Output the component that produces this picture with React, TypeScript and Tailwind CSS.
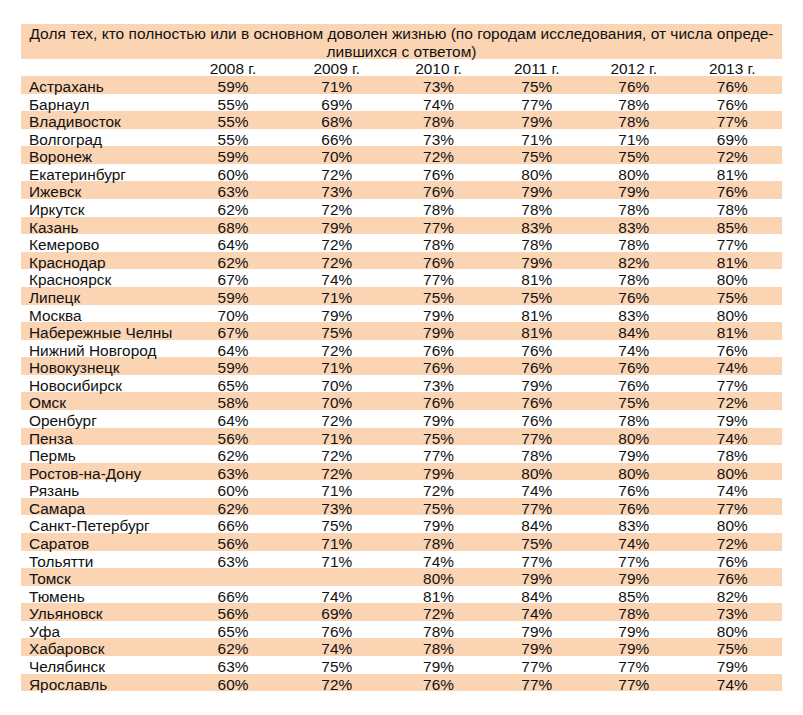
const years = ['2008 г.', '2009 г.', '2010 г.', '2011 г.', '2012 г.', '2013 г.']

const rows: [string, string[]][] = [
  ['Астрахань', ['59%', '71%', '73%', '75%', '76%', '76%']],
  ['Барнаул', ['55%', '69%', '74%', '77%', '78%', '76%']],
  ['Владивосток', ['55%', '68%', '78%', '79%', '78%', '77%']],
  ['Волгоград', ['55%', '66%', '73%', '71%', '71%', '69%']],
  ['Воронеж', ['59%', '70%', '72%', '75%', '75%', '72%']],
  ['Екатеринбург', ['60%', '72%', '76%', '80%', '80%', '81%']],
  ['Ижевск', ['63%', '73%', '76%', '79%', '79%', '76%']],
  ['Иркутск', ['62%', '72%', '78%', '78%', '78%', '78%']],
  ['Казань', ['68%', '79%', '77%', '83%', '83%', '85%']],
  ['Кемерово', ['64%', '72%', '78%', '78%', '78%', '77%']],
  ['Краснодар', ['62%', '72%', '76%', '79%', '82%', '81%']],
  ['Красноярск', ['67%', '74%', '77%', '81%', '78%', '80%']],
  ['Липецк', ['59%', '71%', '75%', '75%', '76%', '75%']],
  ['Москва', ['70%', '79%', '79%', '81%', '83%', '80%']],
  ['Набережные Челны', ['67%', '75%', '79%', '81%', '84%', '81%']],
  ['Нижний Новгород', ['64%', '72%', '76%', '76%', '74%', '76%']],
  ['Новокузнецк', ['59%', '71%', '76%', '76%', '76%', '74%']],
  ['Новосибирск', ['65%', '70%', '73%', '79%', '76%', '77%']],
  ['Омск', ['58%', '70%', '76%', '76%', '75%', '72%']],
  ['Оренбург', ['64%', '72%', '79%', '76%', '78%', '79%']],
  ['Пенза', ['56%', '71%', '75%', '77%', '80%', '74%']],
  ['Пермь', ['62%', '72%', '77%', '78%', '79%', '78%']],
  ['Ростов-на-Дону', ['63%', '72%', '79%', '80%', '80%', '80%']],
  ['Рязань', ['60%', '71%', '72%', '74%', '76%', '74%']],
  ['Самара', ['62%', '73%', '75%', '77%', '76%', '77%']],
  ['Санкт-Петербург', ['66%', '75%', '79%', '84%', '83%', '80%']],
  ['Саратов', ['56%', '71%', '78%', '75%', '74%', '72%']],
  ['Тольятти', ['63%', '71%', '74%', '77%', '77%', '76%']],
  ['Томск', ['', '', '80%', '79%', '79%', '76%']],
  ['Тюмень', ['66%', '74%', '81%', '84%', '85%', '82%']],
  ['Ульяновск', ['56%', '69%', '72%', '74%', '78%', '73%']],
  ['Уфа', ['65%', '76%', '78%', '79%', '79%', '80%']],
  ['Хабаровск', ['62%', '74%', '78%', '79%', '79%', '75%']],
  ['Челябинск', ['63%', '75%', '79%', '77%', '77%', '79%']],
  ['Ярославль', ['60%', '72%', '76%', '77%', '77%', '74%']],
]

const cols = 'grid grid-cols-[160px_104px_103.5px_100px_96.5px_97.5px_99.5px]'

export default function App() {
  return (
    <div className="min-h-[715px] w-[803px] bg-white pt-[24px] pl-[21px] text-[15.4px] text-[#111] font-['Liberation_Sans',Arial,sans-serif]">
      <div className="w-[761px]">
        <div className="h-[34.7px] bg-[#fbd4b4] pt-[1px] text-center text-[15.5px] leading-[18px] whitespace-nowrap">
          Доля тех, кто полностью или в основном доволен жизнью (по городам исследования, от числа опреде-
          <br />
          лившихся с ответом)
        </div>
        <div className={`${cols} h-[17.3px] pt-[1.5px] leading-[17.3px]`}>
          <div />
          {years.map((y) => (
            <div key={y} className="text-center">{y}</div>
          ))}
        </div>
        {rows.map(([city, vals], i) => (
          <div
            key={city}
            className={`${cols} h-[17.59px] pt-[2px] leading-[17.6px] ${i % 2 === 0 ? 'bg-[#fbd4b4]' : 'bg-white'}`}
          >
            <div className="pl-[8px] whitespace-nowrap">{city}</div>
            {vals.map((v, j) => (
              <div key={j} className="text-center">{v}</div>
            ))}
          </div>
        ))}
      </div>
    </div>
  )
}
